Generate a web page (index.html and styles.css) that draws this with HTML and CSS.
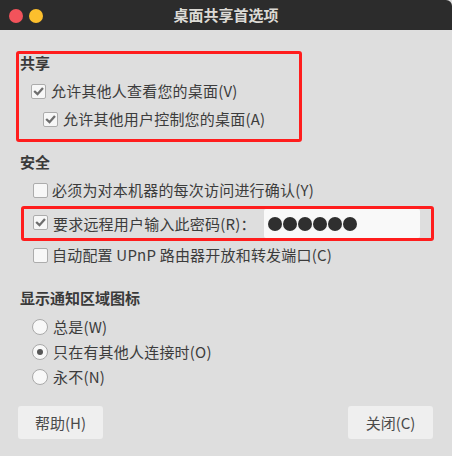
FILE: index.html
```html
<!DOCTYPE html>
<html lang="zh-CN">
<head>
<meta charset="utf-8">
<title>桌面共享首选项</title>
<link rel="stylesheet" href="styles.css">
</head>
<body>
<div class="window">
  <header class="titlebar">
    <div class="lights">
      <span class="light red"></span>
      <span class="light yellow"></span>
    </div>
    <div class="title">桌面共享首选项</div>
    <div></div>
  </header>

  <main class="content">
    <section class="mark mark-share">
      <div class="heading">共享</div>
      <label class="row row-a">
        <span class="check on"><svg viewBox="0 0 13 13"><polyline points="3,6.8 5.5,9.2 10.2,3.8"/></svg></span>
        <span class="txt">允许其他人查看您的桌面(V)</span>
      </label>
      <label class="row row-b">
        <span class="check on"><svg viewBox="0 0 13 13"><polyline points="3,6.8 5.5,9.2 10.2,3.8"/></svg></span>
        <span class="txt">允许其他用户控制您的桌面(A)</span>
      </label>
    </section>

    <section class="group">
      <div class="heading h-safe">安全</div>
      <label class="row row-c">
        <span class="check"></span>
        <span class="txt">必须为对本机器的每次访问进行确认(Y)</span>
      </label>
      <div class="mark mark-pass">
        <label class="row row-p">
          <span class="check on"><svg viewBox="0 0 13 13"><polyline points="3,6.8 5.5,9.2 10.2,3.8"/></svg></span>
          <span class="txt">要求远程用户输入此密码(R)：</span>
        </label>
        <div class="field" aria-label="密码">
          <span class="dot"></span><span class="dot"></span><span class="dot"></span><span class="dot"></span><span class="dot"></span><span class="dot"></span>
        </div>
      </div>
      <label class="row row-c">
        <span class="check"></span>
        <span class="txt">自动配置 UPnP 路由器开放和转发端口(C)</span>
      </label>
    </section>

    <section class="group">
      <div class="heading h-notify">显示通知区域图标</div>
      <div class="radios">
        <label class="rrow"><span class="radio"></span><span class="txt">总是(W)</span></label>
        <label class="rrow"><span class="radio on"></span><span class="txt">只在有其他人连接时(O)</span></label>
        <label class="rrow"><span class="radio"></span><span class="txt">永不(N)</span></label>
      </div>
    </section>
  </main>

  <footer class="footer">
    <button class="btn">帮助(H)</button>
    <button class="btn">关闭(C)</button>
  </footer>
</div>
</body>
</html>
```
FILE: styles.css
```css
html, body {
  margin: 0;
  padding: 0;
  background: #dfdfdf;
}
body {
  width: 452px;
  height: 456px;
  overflow: hidden;
  font-family: "Noto Sans CJK SC", "Noto Sans", sans-serif;
  color: #3c3c3c;
}
.window {
  width: 452px;
  height: 456px;
  background: #dedede;
  display: flex;
  flex-direction: column;
}
.titlebar {
  height: 30px;
  background: #2c2c2c;
  border-top-right-radius: 6px;
  display: grid;
  grid-template-columns: 1fr auto 1fr;
  align-items: center;
}
.lights {
  display: flex;
  gap: 6px;
  padding-left: 9px;
  padding-top: 1px;
}
.light {
  width: 14px;
  height: 14px;
  border-radius: 50%;
}
.red { background: #f2535b; }
.yellow { background: #fcbf2d; }
.title {
  color: #dcdad5;
  font-weight: bold;
  font-size: 15px;
  line-height: 18px;
}
.content {
  display: flex;
  flex-direction: column;
}
.mark {
  border: 3px solid #ff1d1d;
  border-radius: 3px;
}
.mark-share {
  margin: 21px 0 0 16px;
  width: 280px;
  height: 85px;
  display: flex;
  flex-direction: column;
}
.heading {
  font-weight: bold;
  font-size: 15px;
  line-height: 18px;
  height: 18px;
  padding-left: 1px;
  color: #3a3a3a;
}
.mark-share .heading { margin-bottom: 5px; }
.row {
  display: flex;
  align-items: center;
  height: 28px;
  font-size: 15px;
  letter-spacing: 0.2px;
  gap: 5px;
}
.txt { white-space: nowrap; line-height: 20px; }
.row-a { padding-left: 12px; }
.row-b { padding-left: 24px; }
.check {
  width: 13px;
  height: 13px;
  flex: none;
  border: 1px solid #acacac;
  border-radius: 2px;
  background: #f7f7f7;
  display: flex;
}
.check svg {
  width: 13px;
  height: 13px;
}
.check polyline {
  fill: none;
  stroke: #6e6e6e;
  stroke-width: 2.3;
  stroke-linecap: square;
}
.group {
  display: flex;
  flex-direction: column;
  padding-left: 19px;
}
.h-safe { margin-top: 11px; margin-bottom: 5px; }
.row-c { padding-left: 14px; gap: 4px; }
.mark-pass {
  margin: 2px 0 0 2px;
  width: 407px;
  height: 29px;
  display: flex;
  align-items: center;
}
.row-p { padding-left: 9px; gap: 5px; height: 29px; }
.row-p .check { margin-top: -3px; }
.field {
  margin-left: auto;
  margin-right: 11px;
  width: 156px;
  height: 29px;
  box-sizing: border-box;
  background: #f9f9f9;
  border-radius: 2px;
  display: flex;
  align-items: center;
  padding-left: 4px;
  gap: 1px;
}
.dot {
  width: 14px;
  height: 14px;
  border-radius: 50%;
  background: #2f2f2f;
}
.h-notify { margin-top: 20px; margin-bottom: 7px; }
.radios { display: flex; flex-direction: column; }
.rrow {
  display: flex;
  align-items: center;
  height: 25px;
  gap: 5px;
  padding-left: 13px;
  font-size: 15px;
  letter-spacing: 0.2px;
}
.radio {
  width: 14px;
  height: 14px;
  flex: none;
  border: 1px solid #a9a9a9;
  border-radius: 50%;
  background: #f8f8f8;
  display: flex;
  align-items: center;
  justify-content: center;
}
.radio.on::after {
  content: "";
  width: 6px;
  height: 6px;
  border-radius: 50%;
  background: #575757;
}
.footer {
  display: flex;
  justify-content: space-between;
  padding: 17px 19px 0 18px;
}
.btn {
  width: 85px;
  height: 33px;
  border: none;
  border-radius: 3px;
  background: #efefef;
  font-family: "Noto Sans CJK SC", "Noto Sans", sans-serif;
  font-size: 15px;
  color: #4a4a4a;
  padding: 0;
}
```
